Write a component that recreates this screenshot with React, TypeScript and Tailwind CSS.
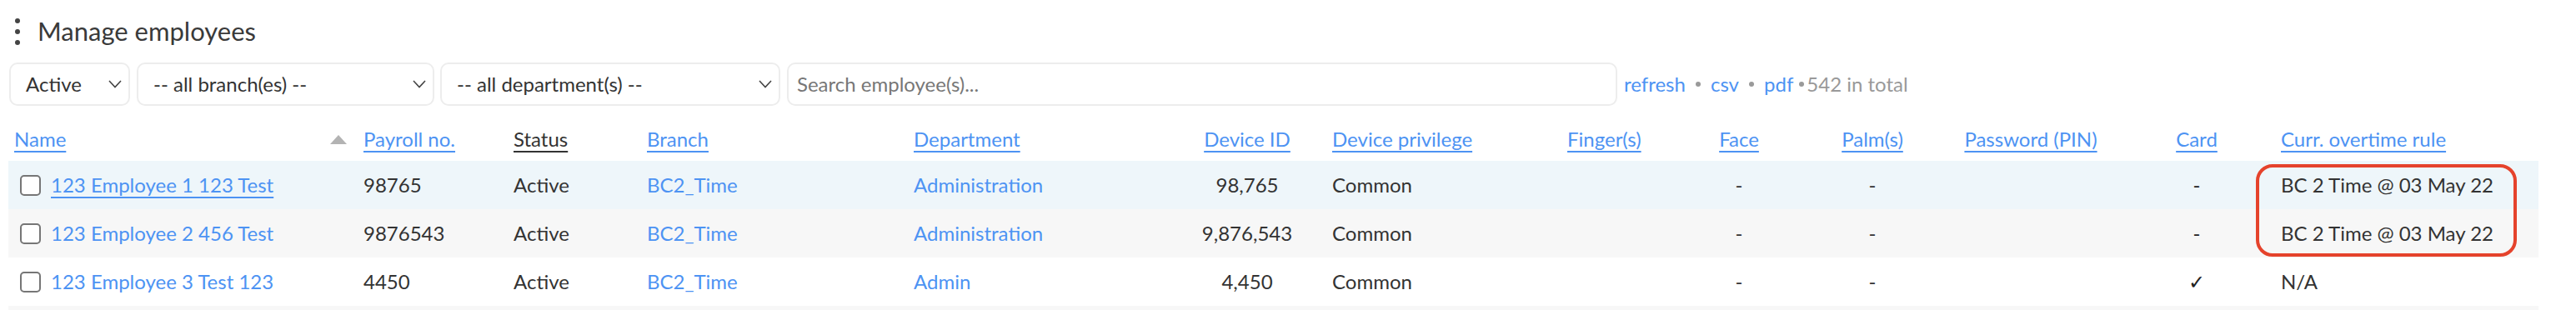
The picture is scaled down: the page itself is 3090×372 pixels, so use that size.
import React from "react";

type Employee = {
  name: string;
  payroll: string;
  status: string;
  branch: string;
  department: string;
  deviceId: string;
  privilege: string;
  finger: string;
  face: string;
  palm: string;
  pin: string;
  card: string;
  overtime: string;
};

const employees: Employee[] = [
  {
    name: "123 Employee 1 123 Test",
    payroll: "98765",
    status: "Active",
    branch: "BC2_Time",
    department: "Administration",
    deviceId: "98,765",
    privilege: "Common",
    finger: "",
    face: "-",
    palm: "-",
    pin: "",
    card: "-",
    overtime: "BC 2 Time @ 03 May 22",
  },
  {
    name: "123 Employee 2 456 Test",
    payroll: "9876543",
    status: "Active",
    branch: "BC2_Time",
    department: "Administration",
    deviceId: "9,876,543",
    privilege: "Common",
    finger: "",
    face: "-",
    palm: "-",
    pin: "",
    card: "-",
    overtime: "BC 2 Time @ 03 May 22",
  },
  {
    name: "123 Employee 3 Test 123",
    payroll: "4450",
    status: "Active",
    branch: "BC2_Time",
    department: "Admin",
    deviceId: "4,450",
    privilege: "Common",
    finger: "",
    face: "-",
    palm: "-",
    pin: "",
    card: "✓",
    overtime: "N/A",
  },
];

const grid =
  "grid grid-cols-[414px_180px_160px_320px_322px_180px_282px_138px_160px_160px_220px_178px_321px]";

const rowBg = ["bg-[#eef6fa]", "bg-[#f7f7f7]", "bg-white", "bg-[#f7f7f7]"];

function Chevron() {
  return (
    <svg width="16" height="10" viewBox="0 0 16 10" className="shrink-0">
      <path d="M1 1 L8 8.5 L15 1" fill="none" stroke="#444" strokeWidth="1.6" />
    </svg>
  );
}

function Select({ label, className }: { label: string; className: string }) {
  return (
    <div
      className={`flex h-[52px] items-center justify-between rounded-[10px] border-2 border-[#ededed] bg-white pl-[18px] pr-[8px] text-[24px] text-[#333] ${className}`}
    >
      <span>{label}</span>
      <Chevron />
    </div>
  );
}

function HeaderLink({ children }: { children: React.ReactNode }) {
  return (
    <span className="text-[#4d93f3] underline decoration-2 underline-offset-[5px]">
      {children}
    </span>
  );
}

function Dot({ className }: { className: string }) {
  return <span className={`block h-[6px] w-[6px] rounded-full bg-[#9a9a9a] ${className}`} />;
}

export default function App() {
  return (
    <div className="relative h-[372px] w-[3090px] overflow-hidden bg-white font-['Lato',sans-serif] text-[#333]">
      {/* Title */}
      <div className="flex h-[75px] items-center pl-[18px]">
        <div className="flex flex-col gap-[7px]">
          <span className="block h-[6px] w-[6px] rounded-full bg-[#444]" />
          <span className="block h-[6px] w-[6px] rounded-full bg-[#444]" />
          <span className="block h-[6px] w-[6px] rounded-full bg-[#444]" />
        </div>
        <h1 className="ml-[21px] text-[31px] leading-none text-[#3a3a3a]">Manage employees</h1>
      </div>

      {/* Filters */}
      <div className="flex items-center pl-[11px]">
        <Select label="Active" className="w-[145px]" />
        <Select label="-- all branch(es) --" className="ml-[8px] w-[357px]" />
        <Select label="-- all department(s) --" className="ml-[7px] w-[408px]" />
        <div className="ml-[8px] flex h-[52px] w-[996px] items-center rounded-[10px] border-2 border-[#ededed] bg-white pl-[10px] text-[24px] text-[#777]">
          Search employee(s)...
        </div>
        <div className="ml-[8px] flex items-center text-[24px]">
          <span className="text-[#4d93f3]">refresh</span>
          <Dot className="mx-[12px]" />
          <span className="text-[#4d93f3]">csv</span>
          <Dot className="mx-[12px]" />
          <span className="text-[#4d93f3]">pdf</span>
          <Dot className="ml-[7px] mr-[3px]" />
          <span className="text-[#999]">542 in total</span>
        </div>
      </div>

      {/* Table */}
      <div className="ml-[10px] mt-[14px] w-[3035px] text-[24px]">
        <div className={`${grid} h-[52px] items-center`}>
          <div className="flex items-center justify-between pl-[7px] pr-[8px]">
            <HeaderLink>Name</HeaderLink>
            <svg width="20" height="11" viewBox="0 0 20 11">
              <path d="M10 0 L20 11 L0 11 Z" fill="#b3b3b3" />
            </svg>
          </div>
          <div className="pl-[12px]"><HeaderLink>Payroll no.</HeaderLink></div>
          <div className="pl-[12px]">
            <span className="text-[#333] underline decoration-2 underline-offset-[5px]">Status</span>
          </div>
          <div className="pl-[12px]"><HeaderLink>Branch</HeaderLink></div>
          <div className="pl-[12px]"><HeaderLink>Department</HeaderLink></div>
          <div className="text-center"><HeaderLink>Device ID</HeaderLink></div>
          <div className="pl-[12px]"><HeaderLink>Device privilege</HeaderLink></div>
          <div className="pl-[12px]"><HeaderLink>Finger(s)</HeaderLink></div>
          <div className="text-center"><HeaderLink>Face</HeaderLink></div>
          <div className="text-center"><HeaderLink>Palm(s)</HeaderLink></div>
          <div className="text-center"><HeaderLink>Password (PIN)</HeaderLink></div>
          <div className="text-center"><HeaderLink>Card</HeaderLink></div>
          <div className="pl-[12px]"><HeaderLink>Curr. overtime rule</HeaderLink></div>
        </div>

        {employees.map((e, i) => (
          <div key={e.name} className={`${grid} h-[58px] items-center ${rowBg[i]}`}>
            <div className="flex items-center pl-[14px]">
              <span className="block h-[25px] w-[25px] rounded-[5px] border-2 border-[#767676] bg-white" />
              <span
                className={`ml-[12px] text-[#4d93f3] ${i === 0 ? "underline decoration-2 underline-offset-[5px]" : ""}`}
              >
                {e.name}
              </span>
            </div>
            <div className="pl-[12px]">{e.payroll}</div>
            <div className="pl-[12px]">{e.status}</div>
            <div className="pl-[12px] text-[#4d93f3]">{e.branch}</div>
            <div className="pl-[12px] text-[#4d93f3]">{e.department}</div>
            <div className="text-center">{e.deviceId}</div>
            <div className="pl-[12px]">{e.privilege}</div>
            <div className="pl-[12px]">{e.finger}</div>
            <div className="text-center">{e.face}</div>
            <div className="text-center">{e.palm}</div>
            <div className="text-center">{e.pin}</div>
            <div className="text-center text-[#222]">{e.card}</div>
            <div className="pl-[12px]">{e.overtime}</div>
          </div>
        ))}
        <div className={`${grid} h-[58px] ${rowBg[3]}`} />
      </div>

      {/* Highlight annotation */}
      <div className="absolute left-[2706px] top-[197px] h-[111px] w-[313px] rounded-[20px] border-[4px] border-[#e5432c]" />
    </div>
  );
}
